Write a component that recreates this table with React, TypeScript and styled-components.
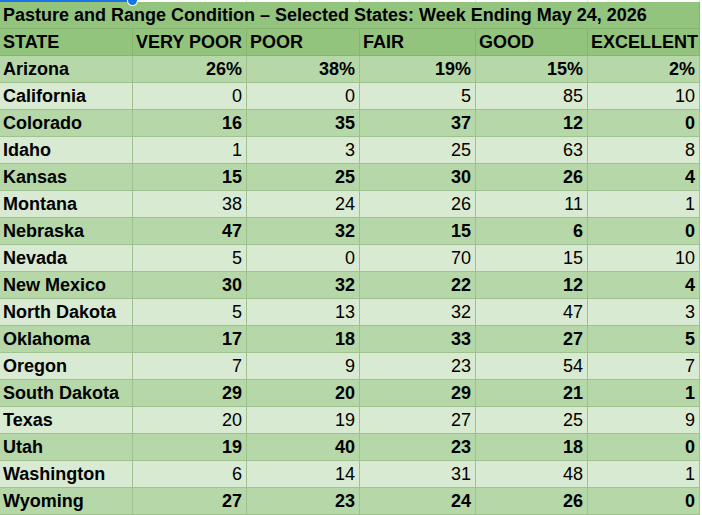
import * as React from 'react';
import styled, { createGlobalStyle } from 'styled-components';

const GlobalStyle = createGlobalStyle`
  html, body {
    margin: 0;
    padding: 0;
    background: #ffffff;
  }
  body {
    font-family: 'Liberation Sans', Arial, sans-serif;
    color: #000000;
  }
`;

type Tone = 'dark' | 'light';

const columns = ['STATE', 'VERY POOR', 'POOR', 'FAIR', 'GOOD', 'EXCELLENT'];

const rows: Array<[string, string[]]> = [
  ['Arizona', ['26%', '38%', '19%', '15%', '2%']],
  ['California', ['0', '0', '5', '85', '10']],
  ['Colorado', ['16', '35', '37', '12', '0']],
  ['Idaho', ['1', '3', '25', '63', '8']],
  ['Kansas', ['15', '25', '30', '26', '4']],
  ['Montana', ['38', '24', '26', '11', '1']],
  ['Nebraska', ['47', '32', '15', '6', '0']],
  ['Nevada', ['5', '0', '70', '15', '10']],
  ['New Mexico', ['30', '32', '22', '12', '4']],
  ['North Dakota', ['5', '13', '32', '47', '3']],
  ['Oklahoma', ['17', '18', '33', '27', '5']],
  ['Oregon', ['7', '9', '23', '54', '7']],
  ['South Dakota', ['29', '20', '29', '21', '1']],
  ['Texas', ['20', '19', '27', '25', '9']],
  ['Utah', ['19', '40', '23', '18', '0']],
  ['Washington', ['6', '14', '31', '48', '1']],
  ['Wyoming', ['27', '23', '24', '26', '0']],
];

const App: React.FC = () => (
  <>
    <GlobalStyle />
    <Sheet>
      <TopStrip>
        {columns.map((c) => (
          <GridGap key={c} />
        ))}
        <SelectionEdge />
        <SelectionHandle />
      </TopStrip>
      <TitleRow>
        <TitleCell>Pasture and Range Condition – Selected States: Week Ending May 24, 2026</TitleCell>
      </TitleRow>
      <HeaderRow>
        {columns.map((c) => (
          <HeaderCell key={c}>{c}</HeaderCell>
        ))}
      </HeaderRow>
      {rows.map(([state, values], i) => {
        const tone: Tone = i % 2 === 0 ? 'dark' : 'light';
        return (
          <DataRow key={state} $tone={tone}>
            <StateCell>{state}</StateCell>
            {values.map((v, j) => (
              <NumCell key={j} $bold={tone === 'dark'}>
                {v}
              </NumCell>
            ))}
          </DataRow>
        );
      })}
    </Sheet>
  </>
);

export default App;

const COLS = '133px 114px 113px 116px 112px 112px';

const Sheet = styled.div`
  position: relative;
  width: 702px;
  font-size: 18px;
  line-height: 20px;
`;

const TopStrip = styled.div`
  position: relative;
  display: grid;
  grid-template-columns: ${COLS};
  height: 2px;
`;

const GridGap = styled.div`
  border-right: 1px solid #e2e3e3;
`;

const SelectionEdge = styled.div`
  position: absolute;
  left: 0;
  top: 0;
  width: 130px;
  height: 2px;
  background: #1a73e8;
`;

const SelectionHandle = styled.div`
  position: absolute;
  left: 128px;
  top: -4px;
  width: 9px;
  height: 9px;
  border-radius: 50%;
  background: #1a73e8;
  box-shadow: 0 0 0 1px #ffffff;
`;

const TitleRow = styled.div`
  display: flex;
  width: 700px;
  height: 27px;
  box-sizing: border-box;
  background: #93c47d;
  border-bottom: 1px solid #86b56f;
  border-right: 1px solid #86b56f;
`;

const TitleCell = styled.div`
  display: flex;
  align-items: center;
  padding: 0 3px;
  font-weight: bold;
  white-space: nowrap;
`;

const Row = styled.div`
  display: grid;
  grid-template-columns: ${COLS};
  width: 700px;
  height: 27px;
`;

const HeaderRow = styled(Row)`
  background: #93c47d;
`;

const DataRow = styled(Row)<{ $tone: Tone }>`
  background: ${(p) => (p.$tone === 'dark' ? '#b6d7a8' : '#d9ead3')};
`;

const Cell = styled.div`
  display: flex;
  align-items: center;
  box-sizing: border-box;
  padding: 0 4px 0 3px;
  border-right: 1px solid #9fc18f;
  border-bottom: 1px solid #9fc18f;
  white-space: nowrap;
  overflow: hidden;
`;

const HeaderCell = styled(Cell)`
  font-weight: bold;
  border-color: #86b56f;
`;

const StateCell = styled(Cell)`
  font-weight: bold;
`;

const NumCell = styled(Cell)<{ $bold: boolean }>`
  justify-content: flex-end;
  font-weight: ${(p) => (p.$bold ? 'bold' : 'normal')};
`;
